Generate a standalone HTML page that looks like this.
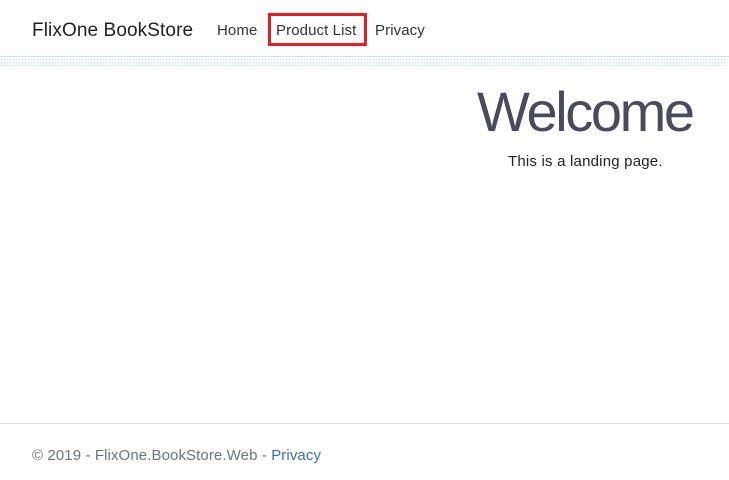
<!DOCTYPE html>
<html><head><meta charset="utf-8"><style>
*{margin:0;padding:0;box-sizing:border-box}
body{width:729px;height:480px;background:#fff;font-family:"Liberation Sans",sans-serif;color:#212529;position:relative;overflow:hidden}
.hdr{position:absolute;left:0;top:0;width:729px;height:57px;border-bottom:1px solid #cfe3ea}
.dots{position:absolute;left:0;top:58px;width:727px;height:8px;background-image:radial-gradient(#d6e8ee 0.8px,transparent 1px);background-size:3px 3px}
.brand{position:absolute;left:32px;top:20px;font-size:19px;color:#222;letter-spacing:0.1px}
.nav{position:absolute;top:22px;font-size:15px;color:#333;letter-spacing:0.1px}
.box{position:absolute;left:268px;top:13px;width:99px;height:33px;border:3px solid #e41e26}
h1{position:absolute;left:477px;top:80px;font-weight:300;font-size:56px;letter-spacing:-2.4px;color:#4a4a5a;line-height:64px}
.sub{position:absolute;left:508px;top:153px;font-size:15px;color:#222;letter-spacing:0.2px}
.fline{position:absolute;left:0;top:423px;width:729px;border-top:1px solid #dee2e6}
.foot{position:absolute;left:32px;top:447px;font-size:15px;color:#6c757d;letter-spacing:0.1px}
.foot span{color:#3a6fb0}
</style></head><body>
<div class="hdr"></div><div class="dots"></div>
<div class="brand">FlixOne BookStore</div>
<div class="nav" style="left:217px">Home</div>
<div class="nav" style="left:276px">Product List</div>
<div class="nav" style="left:375px">Privacy</div>
<div class="box"></div>
<h1>Welcome</h1>
<div class="sub">This is a landing page.</div>
<div class="fline"></div>
<div class="foot">© 2019 - FlixOne.BookStore.Web - <span>Privacy</span></div>
</body></html>
